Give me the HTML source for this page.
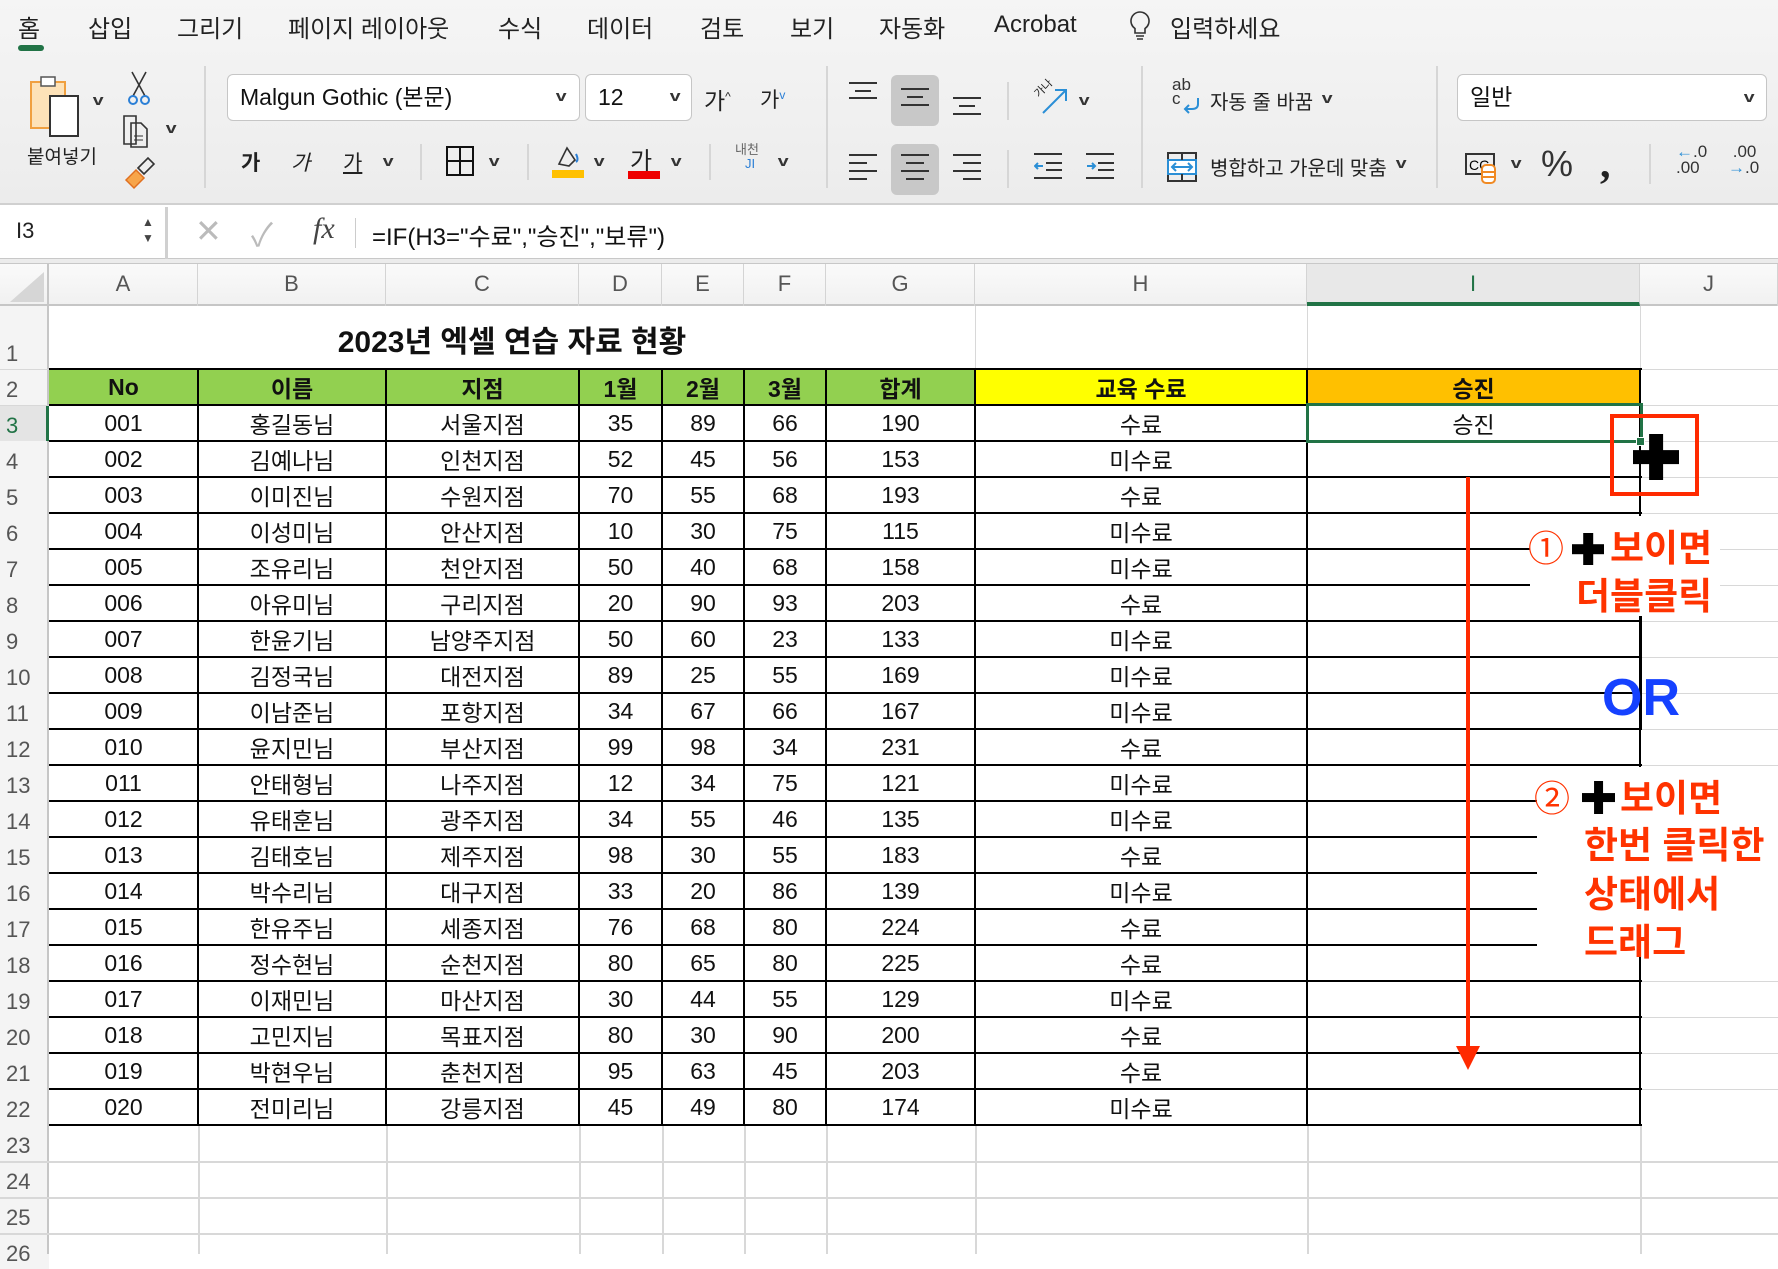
<!DOCTYPE html>
<html><head><meta charset="utf-8">
<style>
*{margin:0;padding:0;box-sizing:border-box}
body{width:1778px;height:1254px;position:relative;overflow:hidden;background:#fff;font-family:"Liberation Sans","Noto Sans CJK KR",sans-serif;color:#111}
.a{position:absolute}
.rib{left:0;top:0;width:1778px;height:205px;background:linear-gradient(#f5f5f5,#ececec);border-bottom:2px solid #d0d0d0}
.tab{position:absolute;top:9px;font-size:24px;color:#222;white-space:nowrap}
.sep{position:absolute;width:2px;background:#d6d6d6}
.box{position:absolute;background:#fff;border:1px solid #c6c6c6;border-radius:6px;font-size:23px;padding-left:12px;line-height:45px}
.chev{position:absolute;font-size:15px;color:#333;transform:scaleX(1.3);font-weight:bold}
.al{position:absolute;width:28px;height:22px}
.al i{position:absolute;height:2px;background:#333;display:block}
.txt{position:absolute;font-size:20px;white-space:nowrap;color:#222}
table{position:absolute;left:0;top:306px;border-spacing:0;table-layout:fixed;font-size:23px}
td{padding:0;text-align:center;white-space:nowrap;overflow:hidden;vertical-align:middle}
td.rn{text-align:left;padding-left:6px;color:#555;font-size:22px;background:#f4f4f4;vertical-align:bottom;padding-bottom:2px}
tr.h td{font-weight:bold}
.g{background:#92d050}.y{background:#ffff00}.o{background:#ffc000}
.hl{position:absolute;height:2px;background:#000}
.vl{position:absolute;width:2px;background:#000}
.ghl{position:absolute;height:1px;background:#d8d8d8}
.gvl{position:absolute;width:1px;background:#d8d8d8}
.ch{position:absolute;top:264px;height:42px;line-height:40px;text-align:center;font-size:22px;color:#555;border-right:1px solid #d4d4d4}
.red{color:#ff3300;font-weight:bold;font-size:37px;position:absolute;white-space:nowrap}
.plus{position:absolute}
.plus:before{content:"";position:absolute;left:0;top:50%;width:100%;height:30%;transform:translateY(-50%);background:#000}
.plus:after{content:"";position:absolute;top:0;left:50%;height:100%;width:30%;transform:translateX(-50%);background:#000}
</style></head><body>
<div class="a rib"></div>
<div class="tab" style="left:18px">홈</div>
<div class="a" style="left:18px;top:45px;width:26px;height:6px;border-radius:3px;background:#217346"></div>
<div class="tab" style="left:88px">삽입</div>
<div class="tab" style="left:177px">그리기</div>
<div class="tab" style="left:288px">페이지 레이아웃</div>
<div class="tab" style="left:498px">수식</div>
<div class="tab" style="left:587px">데이터</div>
<div class="tab" style="left:700px">검토</div>
<div class="tab" style="left:790px">보기</div>
<div class="tab" style="left:879px">자동화</div>
<div class="tab" style="left:994px;top:11px">Acrobat</div>
<svg class="a" style="left:1128px;top:10px" width="24" height="32" viewBox="0 0 24 32"><path d="M12 2a9 9 0 0 0-5 16.5V23h10v-4.5A9 9 0 0 0 12 2z" fill="none" stroke="#333" stroke-width="1.6"/><path d="M8 26h8M9 29h6" stroke="#333" stroke-width="1.6"/></svg>
<div class="tab" style="left:1170px">입력하세요</div>

<svg class="a" style="left:28px;top:74px" width="60" height="66" viewBox="0 0 60 66"><rect x="3" y="8" width="34" height="46" fill="#fde2b8" stroke="#f0a040" stroke-width="2"/><rect x="13" y="3" width="14" height="9" fill="#fff" stroke="#555" stroke-width="1.5"/><rect x="22" y="22" width="28" height="40" fill="#fff" stroke="#333" stroke-width="2"/></svg>
<div class="chev" style="left:94px;top:92px">v</div>
<div class="txt" style="left:27px;top:142px;font-size:19px">붙여넣기</div>
<svg class="a" style="left:126px;top:70px" width="26" height="36" viewBox="0 0 26 36"><path d="M6 2l13 24M20 2L7 26" stroke="#333" stroke-width="1.6" fill="none"/><circle cx="7" cy="30" r="4" fill="none" stroke="#2b7fd6" stroke-width="2"/><circle cx="19" cy="30" r="4" fill="none" stroke="#2b7fd6" stroke-width="2"/></svg>
<svg class="a" style="left:122px;top:114px" width="32" height="36" viewBox="0 0 32 36"><path d="M2 2h12v28H2z M9 9h10l6 6v18H9z" fill="none" stroke="#333" stroke-width="1.6"/><path d="M12 22h9M12 26h9" stroke="#333"/></svg>
<div class="chev" style="left:167px;top:120px">v</div>
<svg class="a" style="left:122px;top:156px" width="34" height="34" viewBox="0 0 34 34"><path d="M4 24l10-10 8 8-10 10z" fill="#f7a54a" stroke="#e07020" stroke-width="1.5"/><path d="M16 12l10-10 6 6-10 10z" fill="none" stroke="#333" stroke-width="1.6"/></svg>
<div class="sep" style="left:204px;top:66px;height:122px"></div>

<div class="box" style="left:227px;top:74px;width:353px;height:47px">Malgun Gothic (본문)</div>
<div class="chev" style="left:557px;top:88px">v</div>
<div class="box" style="left:585px;top:74px;width:107px;height:47px">12</div>
<div class="chev" style="left:671px;top:88px">v</div>
<div class="txt" style="left:704px;top:82px;font-size:23px">가<sup style="font-size:12px">^</sup></div>
<div class="txt" style="left:760px;top:84px;font-size:21px">가<sup style="font-size:12px;color:#2b7fd6">v</sup></div>
<div class="txt" style="left:241px;top:147px;font-size:21px;font-weight:bold">가</div>
<div class="txt" style="left:291px;top:147px;font-size:21px;font-style:italic">가</div>
<div class="txt" style="left:343px;top:147px;font-size:21px;text-decoration:underline">가</div>
<div class="chev" style="left:384px;top:153px">v</div>
<div class="sep" style="left:420px;top:144px;height:36px"></div>
<svg class="a" style="left:446px;top:146px" width="28" height="30"><rect x="1" y="1" width="26" height="28" fill="none" stroke="#111" stroke-width="2"/><path d="M14 1v28M1 15h26" stroke="#111" stroke-width="2"/></svg>
<div class="chev" style="left:490px;top:153px">v</div>
<div class="sep" style="left:527px;top:144px;height:36px"></div>
<svg class="a" style="left:551px;top:144px" width="34" height="34"><path d="M8 20l8-16 8 12-6 6z" fill="none" stroke="#333" stroke-width="1.6"/><path d="M25 10q3 6 0 8" stroke="#2b7fd6" stroke-width="2" fill="none"/><rect x="1" y="26" width="32" height="8" fill="#ffc000"/></svg>
<div class="chev" style="left:595px;top:153px">v</div>
<div class="txt" style="left:630px;top:141px;font-size:24px">가</div>
<div class="a" style="left:628px;top:171px;width:32px;height:8px;background:#ee0000"></div>
<div class="chev" style="left:672px;top:153px">v</div>
<div class="sep" style="left:709px;top:144px;height:36px"></div>
<div class="txt" style="left:735px;top:143px;font-size:13px;color:#666;line-height:14px">내천<br><span style="color:#2b7fd6;padding-left:10px">JI</span></div>
<div class="chev" style="left:779px;top:153px">v</div>
<div class="sep" style="left:826px;top:66px;height:122px"></div>

<div class="a" style="left:891px;top:75px;width:48px;height:51px;background:#c8c8c8;border-radius:6px"></div>
<div class="a" style="left:891px;top:144px;width:48px;height:51px;background:#c8c8c8;border-radius:6px"></div>
<div class="al" style="left:849px;top:82px"><i style="top:0;left:0;width:28px"></i><i style="top:8px;left:6px;width:16px"></i><i style="top:15px;left:0;width:28px"></i></div>
<div class="al" style="left:901px;top:88px"><i style="top:0;left:0;width:28px"></i><i style="top:8px;left:6px;width:16px"></i><i style="top:16px;left:0;width:28px"></i></div>
<div class="al" style="left:953px;top:97px"><i style="top:0;left:0;width:28px"></i><i style="top:8px;left:6px;width:16px"></i><i style="top:16px;left:0;width:28px"></i></div>
<div class="al" style="left:849px;top:154px"><i style="top:0;left:0;width:28px"></i><i style="top:8px;left:0;width:18px"></i><i style="top:16px;left:0;width:28px"></i><i style="top:24px;left:0;width:18px"></i></div>
<div class="al" style="left:901px;top:154px"><i style="top:0;left:0;width:28px"></i><i style="top:8px;left:5px;width:18px"></i><i style="top:16px;left:0;width:28px"></i><i style="top:24px;left:5px;width:18px"></i></div>
<div class="al" style="left:953px;top:154px"><i style="top:0;left:0;width:28px"></i><i style="top:8px;left:10px;width:18px"></i><i style="top:16px;left:0;width:28px"></i><i style="top:24px;left:10px;width:18px"></i></div>
<div class="sep" style="left:1007px;top:82px;height:38px"></div>
<div class="sep" style="left:1007px;top:150px;height:38px"></div>
<div class="txt" style="left:1033px;top:80px;font-size:11px;transform:rotate(-45deg)">가나</div>
<svg class="a" style="left:1040px;top:86px" width="30" height="30"><path d="M3 27L26 4M15 4h11v11" stroke="#2b8fd6" stroke-width="2" fill="none"/></svg>
<div class="chev" style="left:1080px;top:92px">v</div>
<svg class="a" style="left:1034px;top:152px" width="30" height="28"><path d="M0 2h28M12 11h16M12 18h16M0 26h28" stroke="#333" stroke-width="2"/><path d="M9 14H1M4 11l-3 3 3 3" stroke="#2b8fd6" stroke-width="2" fill="none"/></svg>
<svg class="a" style="left:1086px;top:152px" width="30" height="28"><path d="M0 2h28M12 11h16M12 18h16M0 26h28" stroke="#333" stroke-width="2"/><path d="M1 14h8M6 11l3 3-3 3" stroke="#2b8fd6" stroke-width="2" fill="none"/></svg>
<div class="sep" style="left:1141px;top:66px;height:122px"></div>
<div class="txt" style="left:1172px;top:78px;font-size:17px;line-height:14px;color:#333">ab<br>c</div>
<svg class="a" style="left:1182px;top:96px" width="20" height="18"><path d="M16 2v6q0 5-6 5H3M7 9l-4 4 4 4" stroke="#2b8fd6" stroke-width="2" fill="none"/></svg>
<div class="txt" style="left:1210px;top:86px">자동 줄 바꿈</div>
<div class="chev" style="left:1323px;top:90px">v</div>
<svg class="a" style="left:1167px;top:152px" width="30" height="30"><rect x="1" y="1" width="28" height="28" fill="none" stroke="#333" stroke-width="2"/><rect x="1" y="8" width="28" height="14" fill="#fff" stroke="#2b8fd6" stroke-width="2"/><path d="M15 1v7M15 22v7" stroke="#333" stroke-width="2"/><path d="M5 15h20M9 11l-4 4 4 4M21 11l4 4-4 4" stroke="#2b8fd6" stroke-width="2" fill="none"/></svg>
<div class="txt" style="left:1210px;top:152px">병합하고 가운데 맞춤</div>
<div class="chev" style="left:1397px;top:155px">v</div>
<div class="sep" style="left:1436px;top:66px;height:122px"></div>

<div class="box" style="left:1457px;top:74px;width:310px;height:47px">일반</div>
<div class="chev" style="left:1745px;top:89px">v</div>
<svg class="a" style="left:1465px;top:151px" width="36" height="34"><rect x="1" y="3" width="28" height="20" fill="none" stroke="#333" stroke-width="2"/><text x="4" y="19" font-size="14" font-family="Liberation Sans">CC</text><rect x="17" y="14" width="13" height="18" rx="4" fill="#fff" stroke="#f08a24" stroke-width="2"/><path d="M17 21h13M17 26h13" stroke="#f08a24" stroke-width="2"/></svg>
<div class="chev" style="left:1512px;top:155px">v</div>
<div class="txt" style="left:1541px;top:143px;font-size:36px;color:#333">%</div>
<div class="txt" style="left:1600px;top:140px;font-size:42px;font-weight:bold;color:#222;font-family:'Liberation Serif',serif">,</div>
<div class="sep" style="left:1649px;top:144px;height:40px"></div>
<div class="txt" style="left:1676px;top:144px;font-size:17px;line-height:16px;color:#333"><span style="color:#2b8fd6">&larr;</span>.0<br>.00</div>
<div class="txt" style="left:1728px;top:144px;font-size:17px;line-height:16px;color:#333">&nbsp;.00<br><span style="color:#2b8fd6">&rarr;</span>.0</div>

<div class="a" style="left:0;top:207px;width:1778px;height:52px;background:#fff;border-bottom:1px solid #c8c8c8"></div>
<div class="a" style="left:0;top:259px;width:1778px;height:5px;background:#ececec;border-bottom:1px solid #c8c8c8"></div>
<div class="txt" style="left:16px;top:218px;font-size:22px">I3</div>
<div class="txt" style="left:142px;top:214px;font-size:12px;color:#444;line-height:16px">▲<br>▼</div>
<div class="a" style="left:165px;top:207px;width:3px;height:52px;background:#d0d0d0"></div>
<div class="txt" style="left:195px;top:212px;font-size:32px;color:#bbb">✕</div>
<div class="txt" style="left:251px;top:210px;font-size:32px;color:#bbb">✓</div>
<div class="txt" style="left:313px;top:212px;font-size:30px;font-style:italic;font-family:'Liberation Serif',serif;color:#444">fx</div>
<div class="a" style="left:355px;top:218px;width:1px;height:30px;background:#ccc"></div>
<div class="txt" style="left:372px;top:217px;font-size:24px;color:#111">=IF(H3="수료","승진","보류")</div>

<div class="a" style="left:0;top:264px;width:1778px;height:42px;background:linear-gradient(#fafafa,#f1f1f1);border-bottom:2px solid #c6c6c6"></div>
<svg class="a" style="left:10px;top:272px" width="34" height="30"><path d="M34 0v30H0z" fill="#d6d6d6"/></svg>
<div class="ch" style="left:0;width:49px;border-right:2px solid #c6c6c6;background:transparent"></div>
<div class="ch" style="left:49px;width:149px">A</div>
<div class="ch" style="left:198px;width:188px">B</div>
<div class="ch" style="left:386px;width:193px">C</div>
<div class="ch" style="left:579px;width:83px">D</div>
<div class="ch" style="left:662px;width:82px">E</div>
<div class="ch" style="left:744px;width:82px">F</div>
<div class="ch" style="left:826px;width:149px">G</div>
<div class="ch" style="left:975px;width:332px">H</div>
<div class="ch" style="left:1307px;width:333px;background:#e8e8e8;color:#217346;border-bottom:4px solid #217346;height:42px">I</div>
<div class="ch" style="left:1640px;width:138px">J</div>

<table>
<colgroup><col style="width:49px"><col style="width:149px"><col style="width:188px"><col style="width:193px"><col style="width:83px"><col style="width:82px"><col style="width:82px"><col style="width:149px"><col style="width:332px"><col style="width:333px"><col style="width:138px"></colgroup>
<tr style="height:63px"><td class="rn">1</td><td colspan="7" style="font-weight:bold;font-size:30px;padding-top:2px">2023년 엑셀 연습 자료 현황</td><td></td><td></td><td></td></tr>
<tr class="h" style="height:36px"><td class="rn" style="font-weight:normal">2</td><td class="g">No</td><td class="g">이름</td><td class="g">지점</td><td class="g">1월</td><td class="g">2월</td><td class="g">3월</td><td class="g">합계</td><td class="y">교육 수료</td><td class="o">승진</td><td></td></tr>
<tr style="height:36px"><td class="rn" style="color:#217346;background:#e4e4e4">3</td><td>001</td><td>홍길동님</td><td>서울지점</td><td>35</td><td>89</td><td>66</td><td>190</td><td>수료</td><td>승진</td><td></td></tr>
<tr style="height:36px"><td class="rn">4</td><td>002</td><td>김예나님</td><td>인천지점</td><td>52</td><td>45</td><td>56</td><td>153</td><td>미수료</td><td></td><td></td></tr>
<tr style="height:36px"><td class="rn">5</td><td>003</td><td>이미진님</td><td>수원지점</td><td>70</td><td>55</td><td>68</td><td>193</td><td>수료</td><td></td><td></td></tr>
<tr style="height:36px"><td class="rn">6</td><td>004</td><td>이성미님</td><td>안산지점</td><td>10</td><td>30</td><td>75</td><td>115</td><td>미수료</td><td></td><td></td></tr>
<tr style="height:36px"><td class="rn">7</td><td>005</td><td>조유리님</td><td>천안지점</td><td>50</td><td>40</td><td>68</td><td>158</td><td>미수료</td><td></td><td></td></tr>
<tr style="height:36px"><td class="rn">8</td><td>006</td><td>아유미님</td><td>구리지점</td><td>20</td><td>90</td><td>93</td><td>203</td><td>수료</td><td></td><td></td></tr>
<tr style="height:36px"><td class="rn">9</td><td>007</td><td>한윤기님</td><td>남양주지점</td><td>50</td><td>60</td><td>23</td><td>133</td><td>미수료</td><td></td><td></td></tr>
<tr style="height:36px"><td class="rn">10</td><td>008</td><td>김정국님</td><td>대전지점</td><td>89</td><td>25</td><td>55</td><td>169</td><td>미수료</td><td></td><td></td></tr>
<tr style="height:36px"><td class="rn">11</td><td>009</td><td>이남준님</td><td>포항지점</td><td>34</td><td>67</td><td>66</td><td>167</td><td>미수료</td><td></td><td></td></tr>
<tr style="height:36px"><td class="rn">12</td><td>010</td><td>윤지민님</td><td>부산지점</td><td>99</td><td>98</td><td>34</td><td>231</td><td>수료</td><td></td><td></td></tr>
<tr style="height:36px"><td class="rn">13</td><td>011</td><td>안태형님</td><td>나주지점</td><td>12</td><td>34</td><td>75</td><td>121</td><td>미수료</td><td></td><td></td></tr>
<tr style="height:36px"><td class="rn">14</td><td>012</td><td>유태훈님</td><td>광주지점</td><td>34</td><td>55</td><td>46</td><td>135</td><td>미수료</td><td></td><td></td></tr>
<tr style="height:36px"><td class="rn">15</td><td>013</td><td>김태호님</td><td>제주지점</td><td>98</td><td>30</td><td>55</td><td>183</td><td>수료</td><td></td><td></td></tr>
<tr style="height:36px"><td class="rn">16</td><td>014</td><td>박수리님</td><td>대구지점</td><td>33</td><td>20</td><td>86</td><td>139</td><td>미수료</td><td></td><td></td></tr>
<tr style="height:36px"><td class="rn">17</td><td>015</td><td>한유주님</td><td>세종지점</td><td>76</td><td>68</td><td>80</td><td>224</td><td>수료</td><td></td><td></td></tr>
<tr style="height:36px"><td class="rn">18</td><td>016</td><td>정수현님</td><td>순천지점</td><td>80</td><td>65</td><td>80</td><td>225</td><td>수료</td><td></td><td></td></tr>
<tr style="height:36px"><td class="rn">19</td><td>017</td><td>이재민님</td><td>마산지점</td><td>30</td><td>44</td><td>55</td><td>129</td><td>미수료</td><td></td><td></td></tr>
<tr style="height:36px"><td class="rn">20</td><td>018</td><td>고민지님</td><td>목표지점</td><td>80</td><td>30</td><td>90</td><td>200</td><td>수료</td><td></td><td></td></tr>
<tr style="height:36px"><td class="rn">21</td><td>019</td><td>박현우님</td><td>춘천지점</td><td>95</td><td>63</td><td>45</td><td>203</td><td>수료</td><td></td><td></td></tr>
<tr style="height:36px"><td class="rn">22</td><td>020</td><td>전미리님</td><td>강릉지점</td><td>45</td><td>49</td><td>80</td><td>174</td><td>미수료</td><td></td><td></td></tr>
<tr style="height:36px"><td class="rn">23</td><td></td><td></td><td></td><td></td><td></td><td></td><td></td><td></td><td></td><td></td></tr>
<tr style="height:36px"><td class="rn">24</td><td></td><td></td><td></td><td></td><td></td><td></td><td></td><td></td><td></td><td></td></tr>
<tr style="height:36px"><td class="rn">25</td><td></td><td></td><td></td><td></td><td></td><td></td><td></td><td></td><td></td><td></td></tr>
<tr style="height:36px"><td class="rn">26</td><td></td><td></td><td></td><td></td><td></td><td></td><td></td><td></td><td></td><td></td></tr>
</table>

<div class="a" style="left:47px;top:306px;width:2px;height:948px;background:#c6c6c6"></div>
<div class="a" style="left:46px;top:405px;width:3px;height:36px;background:#217346"></div>
<div class="ghl" style="left:0;top:369px;width:1778px"></div>
<div class="ghl" style="left:1640px;top:405px;width:138px"></div><div class="ghl" style="left:1640px;top:441px;width:138px"></div><div class="ghl" style="left:1640px;top:477px;width:138px"></div><div class="ghl" style="left:1640px;top:513px;width:138px"></div><div class="ghl" style="left:1640px;top:549px;width:138px"></div><div class="ghl" style="left:1640px;top:585px;width:138px"></div><div class="ghl" style="left:1640px;top:621px;width:138px"></div><div class="ghl" style="left:1640px;top:657px;width:138px"></div><div class="ghl" style="left:1640px;top:693px;width:138px"></div><div class="ghl" style="left:1640px;top:729px;width:138px"></div><div class="ghl" style="left:1640px;top:765px;width:138px"></div><div class="ghl" style="left:1640px;top:801px;width:138px"></div><div class="ghl" style="left:1640px;top:837px;width:138px"></div><div class="ghl" style="left:1640px;top:873px;width:138px"></div><div class="ghl" style="left:1640px;top:909px;width:138px"></div><div class="ghl" style="left:1640px;top:945px;width:138px"></div><div class="ghl" style="left:1640px;top:981px;width:138px"></div><div class="ghl" style="left:1640px;top:1017px;width:138px"></div><div class="ghl" style="left:1640px;top:1053px;width:138px"></div><div class="ghl" style="left:1640px;top:1089px;width:138px"></div>
<div class="ghl" style="left:0;top:1161px;width:1778px;height:2px"></div><div class="ghl" style="left:0;top:1197px;width:1778px;height:2px"></div><div class="ghl" style="left:0;top:1233px;width:1778px;height:2px"></div>
<div class="ghl" style="left:0;top:405px;width:49px"></div>
<div class="gvl" style="left:975px;top:306px;height:63px"></div><div class="gvl" style="left:1307px;top:306px;height:63px"></div><div class="gvl" style="left:1640px;top:306px;height:63px"></div>
<div class="gvl" style="left:198px;top:1125px;height:129px;width:2px"></div><div class="gvl" style="left:386px;top:1125px;height:129px;width:2px"></div><div class="gvl" style="left:579px;top:1125px;height:129px;width:2px"></div><div class="gvl" style="left:662px;top:1125px;height:129px;width:2px"></div><div class="gvl" style="left:744px;top:1125px;height:129px;width:2px"></div><div class="gvl" style="left:826px;top:1125px;height:129px;width:2px"></div><div class="gvl" style="left:975px;top:1125px;height:129px;width:2px"></div><div class="gvl" style="left:1307px;top:1125px;height:129px;width:2px"></div><div class="gvl" style="left:1640px;top:1125px;height:129px;width:2px"></div>
<div class="gvl" style="left:1640px;top:369px;height:36px"></div>
<div class="hl" style="left:49px;top:368px;width:1593px"></div>
<div class="hl" style="left:49px;top:404px;width:1593px"></div>
<div class="hl" style="left:49px;top:440px;width:1593px"></div><div class="hl" style="left:49px;top:476px;width:1593px"></div><div class="hl" style="left:49px;top:512px;width:1593px"></div><div class="hl" style="left:49px;top:548px;width:1593px"></div><div class="hl" style="left:49px;top:584px;width:1593px"></div><div class="hl" style="left:49px;top:620px;width:1593px"></div><div class="hl" style="left:49px;top:656px;width:1593px"></div><div class="hl" style="left:49px;top:692px;width:1593px"></div><div class="hl" style="left:49px;top:728px;width:1593px"></div><div class="hl" style="left:49px;top:764px;width:1593px"></div><div class="hl" style="left:49px;top:800px;width:1593px"></div><div class="hl" style="left:49px;top:836px;width:1593px"></div><div class="hl" style="left:49px;top:872px;width:1593px"></div><div class="hl" style="left:49px;top:908px;width:1593px"></div><div class="hl" style="left:49px;top:944px;width:1593px"></div><div class="hl" style="left:49px;top:980px;width:1593px"></div><div class="hl" style="left:49px;top:1016px;width:1593px"></div><div class="hl" style="left:49px;top:1052px;width:1593px"></div><div class="hl" style="left:49px;top:1088px;width:1593px"></div><div class="hl" style="left:49px;top:1124px;width:1593px"></div>
<div class="vl" style="left:197px;top:369px;height:757px"></div><div class="vl" style="left:385px;top:369px;height:757px"></div><div class="vl" style="left:578px;top:369px;height:757px"></div><div class="vl" style="left:661px;top:369px;height:757px"></div><div class="vl" style="left:743px;top:369px;height:757px"></div><div class="vl" style="left:825px;top:369px;height:757px"></div><div class="vl" style="left:974px;top:369px;height:757px"></div><div class="vl" style="left:1306px;top:369px;height:757px"></div><div class="vl" style="left:1639px;top:369px;height:757px"></div>

<div class="a" style="left:1306px;top:403px;width:337px;height:40px;border:3px solid #217346"></div>
<div class="a" style="left:1636px;top:437px;width:9px;height:9px;background:#217346;border:1px solid #fff"></div>

<div class="a" style="left:1610px;top:414px;width:89px;height:82px;border:4px solid #ff2a00"></div>
<div class="plus" style="left:1633px;top:434px;width:46px;height:46px"></div>
<div class="a" style="left:1466px;top:477px;width:4px;height:578px;background:#ff2a00"></div>
<svg class="a" style="left:1455px;top:1045px" width="26" height="26"><path d="M1 1h24L13 25z" fill="#ff2a00"/></svg>

<div class="a" style="left:1530px;top:516px;width:190px;height:100px;background:#fff"></div>
<div class="red" style="left:1528px;top:520px;font-weight:normal;font-size:36px">①</div>
<div class="plus" style="left:1572px;top:533px;width:32px;height:32px"></div>
<div class="red" style="left:1610px;top:518px">보이면</div>
<div class="red" style="left:1576px;top:566px">더블클릭</div>
<div class="a" style="left:1640px;top:616px;width:2px;height:113px;background:#000"></div>

<div class="a" style="left:1602px;top:668px;font-size:52px;font-weight:bold;color:#1541ff">OR</div>

<div class="a" style="left:1537px;top:767px;width:241px;height:181px;background:#fff"></div>
<div class="red" style="left:1534px;top:770px;font-weight:normal;font-size:36px">②</div>
<div class="plus" style="left:1582px;top:781px;width:33px;height:33px"></div>
<div class="red" style="left:1620px;top:768px">보이면</div>
<div class="red" style="left:1584px;top:815px">한번 클릭한</div>
<div class="red" style="left:1584px;top:864px">상태에서</div>
<div class="red" style="left:1584px;top:912px">드래그</div>
</body></html>
